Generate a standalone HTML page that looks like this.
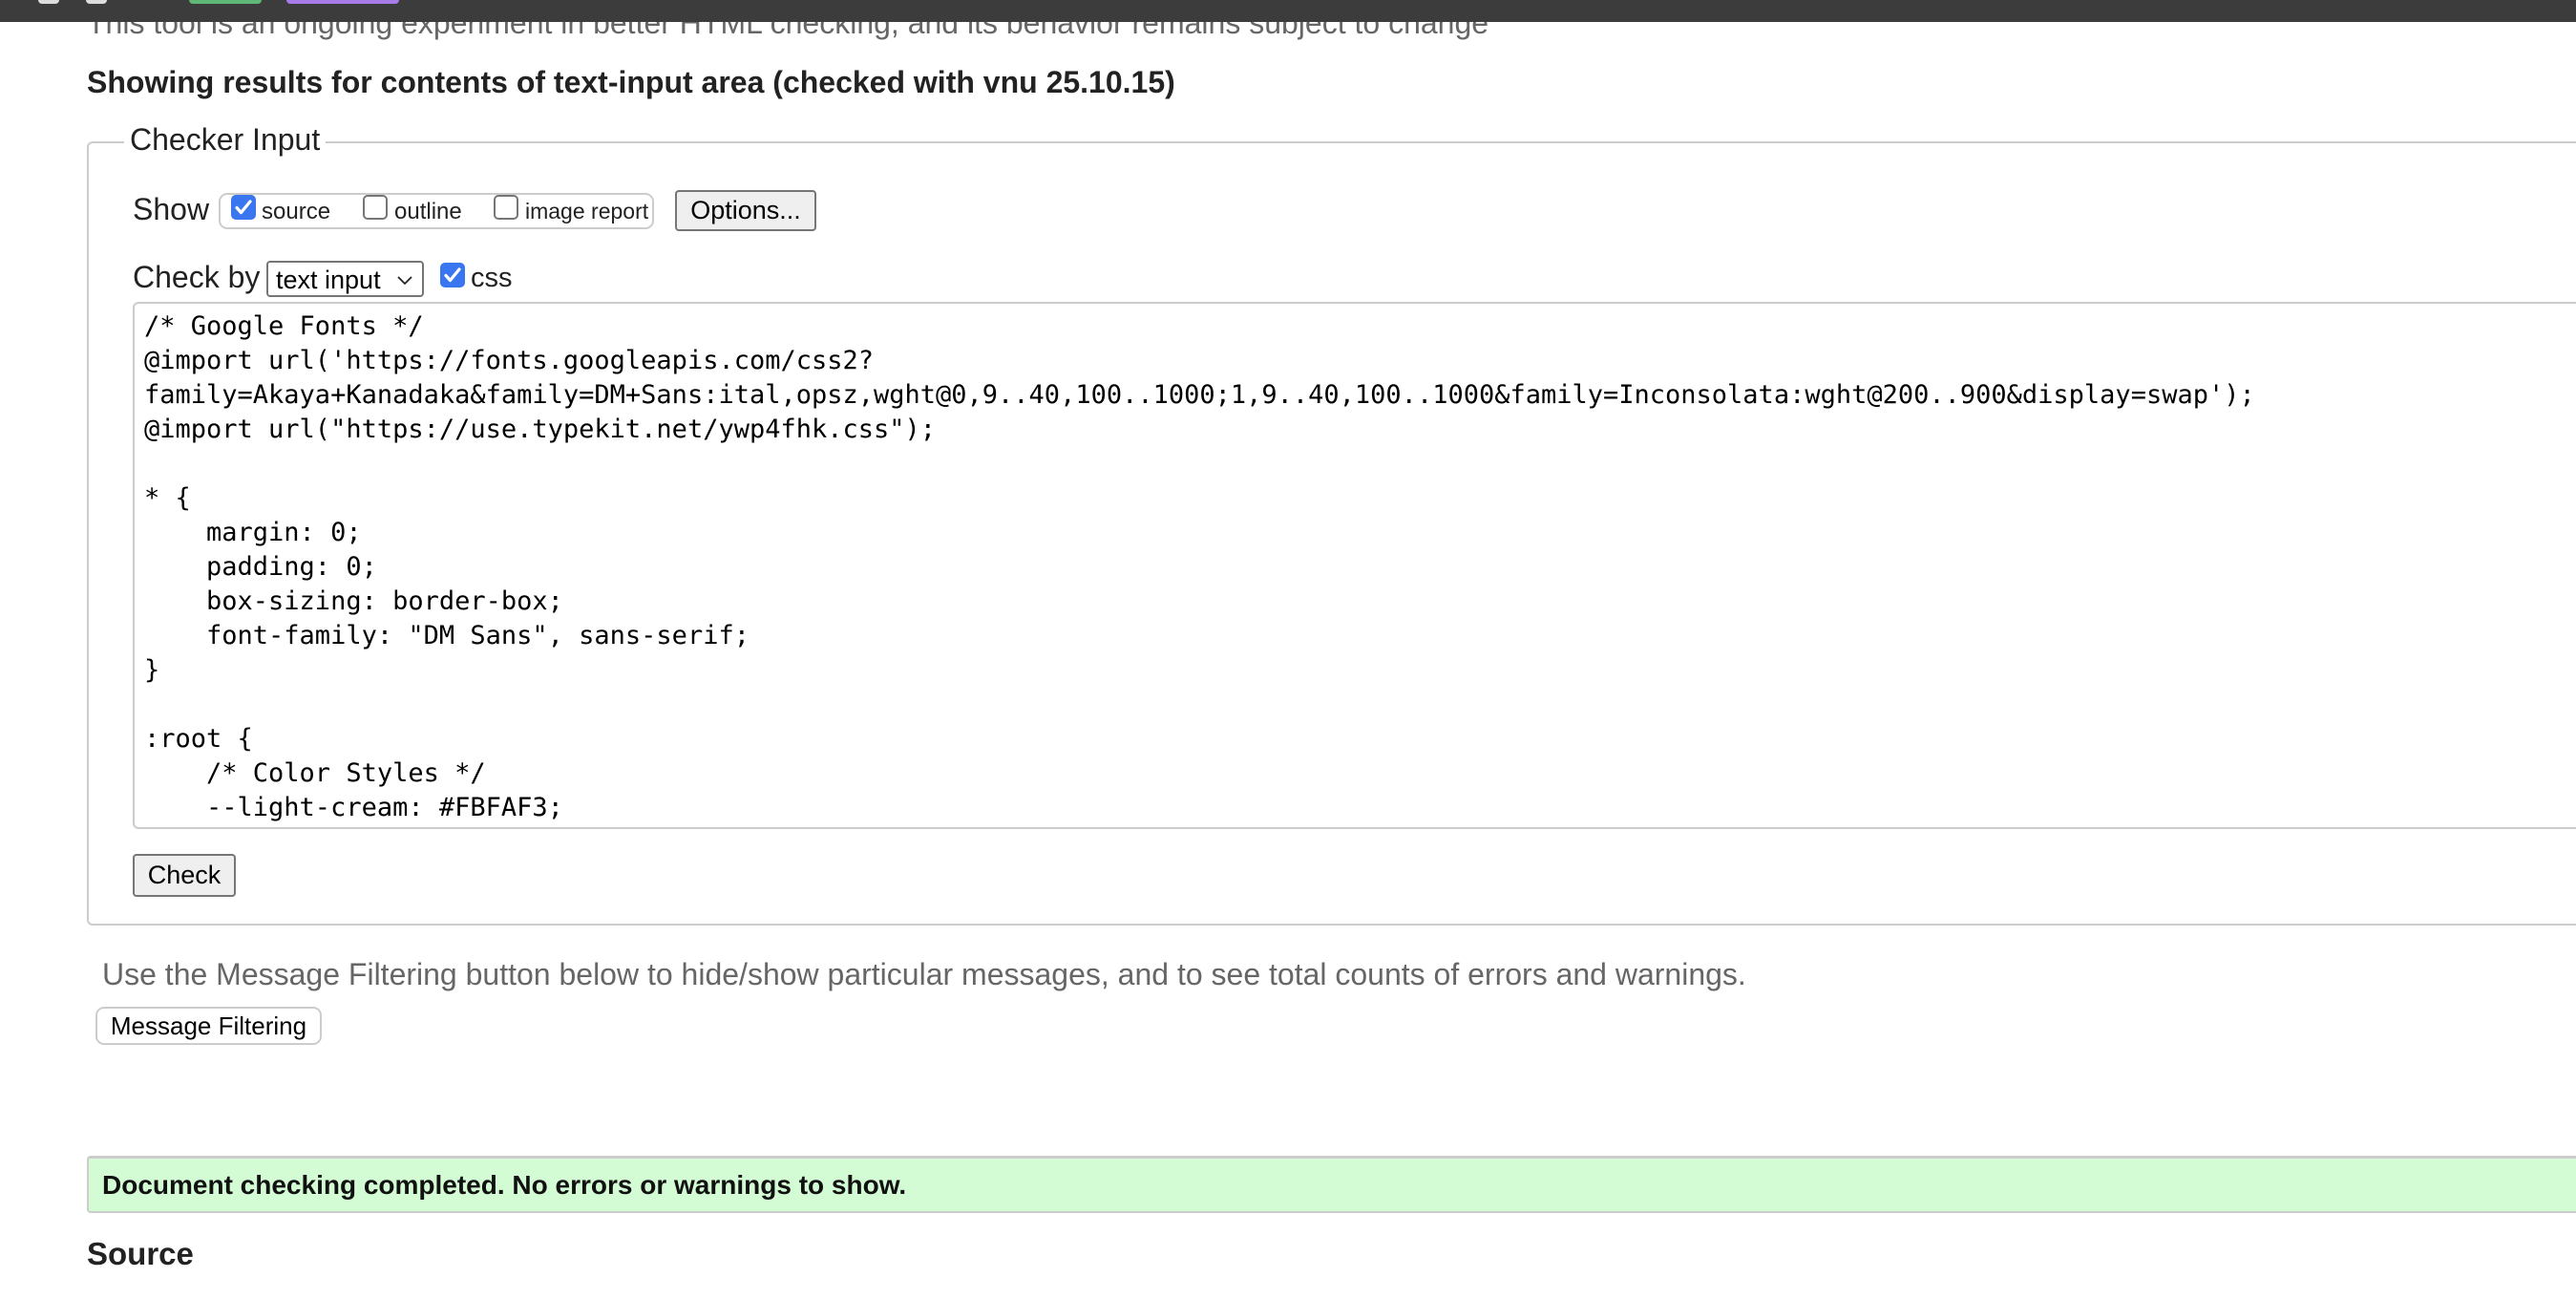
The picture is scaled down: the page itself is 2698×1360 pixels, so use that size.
<!DOCTYPE html>
<html><head><meta charset="utf-8"><style>
*{margin:0;padding:0;box-sizing:border-box}
html,body{width:2698px;height:1360px;overflow:hidden;background:#fff;font-family:"Liberation Sans",Arial,sans-serif;color:#222}
.a{position:absolute;white-space:nowrap}
.cb{position:absolute;width:26px;height:26px;border-radius:5px}
.on{background:#3a76f0}
.off{border:2.5px solid #767676;background:#fff}
.on svg{position:absolute;left:3px;top:3px}
.btn{position:absolute;background:#efefef;border:2px solid #767676;border-radius:4px;font-size:27px;color:#000;display:flex;align-items:center;justify-content:center}
.code{position:absolute;left:151px;top:324px;font-family:"DejaVu Sans Mono","Liberation Mono",monospace;font-size:27px;line-height:36px;color:#000;white-space:pre}
</style></head><body>
<div class="a" style="left:0;top:0;width:2698px;height:23px;background:#3c3c3c"></div>
<div class="a" style="left:40px;top:0;width:22px;height:4px;background:#ddd;border-radius:0 0 4px 4px"></div>
<div class="a" style="left:90px;top:0;width:22px;height:4px;background:#ddd;border-radius:0 0 4px 4px"></div>
<div class="a" style="left:198px;top:0;width:76px;height:4px;background:#5fb878;border-radius:0 0 4px 4px"></div>
<div class="a" style="left:300px;top:0;width:118px;height:4px;background:#a87ce8;border-radius:0 0 4px 4px"></div>
<div class="a" style="left:91px;top:6px;font-size:32px;color:#666;clip-path:inset(17px 0 0 0)">This tool is an ongoing experiment in better HTML checking, and its behavior remains subject to change</div>
<div class="a" style="left:91px;top:68px;font-size:32px;font-weight:bold;color:#222">Showing results for contents of text-input area (checked with vnu 25.10.15)</div>

<div class="a" style="left:91px;top:148px;width:2700px;height:821px;border:2px solid #ccc;border-right:none;border-radius:6px 0 0 6px"></div>
<div class="a" style="left:130px;top:128px;padding:0 6px;background:#fff;font-size:32px;color:#222">Checker Input</div>

<div class="a" style="left:139px;top:201px;font-size:32px;color:#222">Show</div>
<div class="a" style="left:229px;top:202px;width:456px;height:38px;border:2px solid #ccc;border-radius:9px"></div>
<div class="cb on" style="left:242px;top:204px"><svg width="20" height="20" viewBox="0 0 20 20"><path d="M3 10.5l4.5 5L17 4" stroke="#fff" stroke-width="3.2" fill="none" stroke-linecap="round" stroke-linejoin="round"/></svg></div>
<div class="a" style="left:274px;top:208px;font-size:24px;color:#222">source</div>
<div class="cb off" style="left:380px;top:204px"></div>
<div class="a" style="left:413px;top:208px;font-size:24px;color:#222">outline</div>
<div class="cb off" style="left:517px;top:204px"></div>
<div class="a" style="left:550px;top:208px;font-size:23px;color:#222">image report</div>
<div class="btn" style="left:707px;top:199px;width:148px;height:43px">Options...</div>

<div class="a" style="left:139px;top:272px;font-size:32px;color:#222">Check by</div>
<div class="a" style="left:279px;top:273px;width:165px;height:38px;border:2px solid #767676;border-radius:4px;font-size:27px;color:#000;padding:3px 0 0 8px">text input<svg style="position:absolute;right:10px;top:14px" width="16" height="10" viewBox="0 0 16 10"><path d="M1 1l7 7 7-7" stroke="#222" stroke-width="1.8" fill="none"/></svg></div>
<div class="cb on" style="left:461px;top:275px"><svg width="20" height="20" viewBox="0 0 20 20"><path d="M3 10.5l4.5 5L17 4" stroke="#fff" stroke-width="3.2" fill="none" stroke-linecap="round" stroke-linejoin="round"/></svg></div>
<div class="a" style="left:493px;top:275px;font-size:29px;color:#222">css</div>

<div class="a" style="left:139px;top:316px;width:2600px;height:552px;border:2px solid #ccc;border-right:none;border-radius:6px 0 0 6px"></div>
<div class="code">/* Google Fonts */
@import url('https://fonts.googleapis.com/css2?
family=Akaya+Kanadaka&amp;family=DM+Sans:ital,opsz,wght@0,9..40,100..1000;1,9..40,100..1000&amp;family=Inconsolata:wght@200..900&amp;display=swap');
@import url("https://use.typekit.net/ywp4fhk.css");

* {
    margin: 0;
    padding: 0;
    box-sizing: border-box;
    font-family: "DM Sans", sans-serif;
}

:root {
    /* Color Styles */
    --light-cream: #FBFAF3;</div>

<div class="btn" style="left:139px;top:894px;width:108px;height:45px">Check</div>

<div class="a" style="left:107px;top:1002px;font-size:32px;color:#666">Use the Message Filtering button below to hide/show particular messages, and to see total counts of errors and warnings.</div>
<div class="a" style="left:100px;top:1054px;width:237px;height:40px;border:2px solid #ccc;border-radius:9px;background:#fff;font-size:26px;color:#000;display:flex;align-items:center;justify-content:center">Message Filtering</div>

<div class="a" style="left:91px;top:1210px;width:2620px;height:60px;background:#d4fcd4;border-top:3px solid #ccc;border-left:2px solid #ccc;border-bottom:2px solid #ccc;border-radius:4px 0 0 4px"></div>
<div class="a" style="left:107px;top:1225px;font-size:28px;font-weight:bold;color:#111">Document checking completed. No errors or warnings to show.</div>
<div class="a" style="left:91px;top:1294px;font-size:33px;font-weight:bold;color:#222">Source</div>
</body></html>
